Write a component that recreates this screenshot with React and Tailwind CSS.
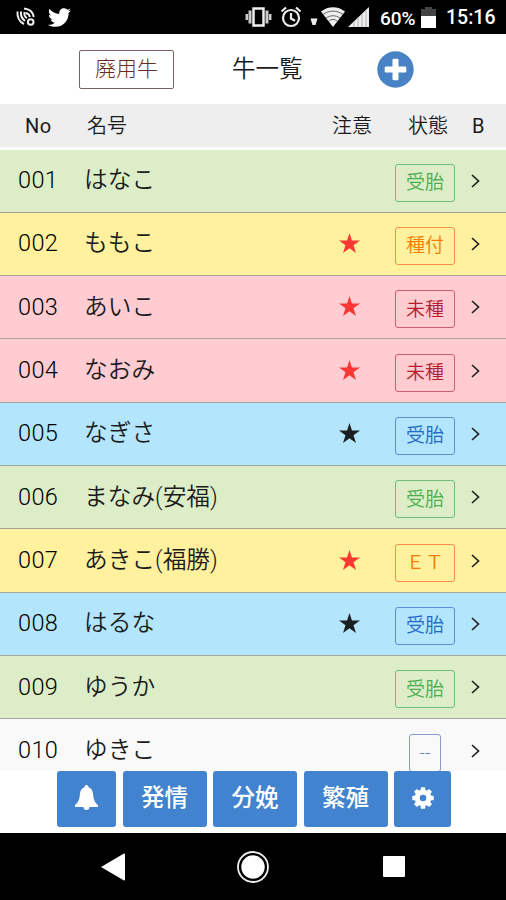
import { FaTwitter } from "react-icons/fa6";

const themes = {
  green: "bg-[#dcedc8]",
  yellow: "bg-[#fff19d]",
  pink: "bg-[#ffccd2]",
  blue: "bg-[#b3e5fc]",
  plain: "bg-[#f9f9f9]",
};

const tags = {
  green: "w-[60px] border-[#6fbe78] text-[#4cae50]",
  orange: "w-[60px] border-[#ff8c4a] text-[#f57c00]",
  red: "w-[60px] border-[#c9606f] text-[#b71c2c]",
  blue: "w-[60px] border-[#5b8fd6] text-[#1f68c4]",
  none: "w-[32px] mr-[14px] border-[#8799cf] text-[#6d82c0]",
};

const cows = [
  { no: "001", name: "はなこ", theme: "green", tag: "green", label: "受胎" },
  { no: "002", name: "ももこ", theme: "yellow", tag: "orange", label: "種付", star: "red" },
  { no: "003", name: "あいこ", theme: "pink", tag: "red", label: "未種", star: "red" },
  { no: "004", name: "なおみ", theme: "pink", tag: "red", label: "未種", star: "red" },
  { no: "005", name: "なぎさ", theme: "blue", tag: "blue", label: "受胎", star: "black" },
  { no: "006", name: "まなみ(安福)", theme: "green", tag: "green", label: "受胎" },
  { no: "007", name: "あきこ(福勝)", theme: "yellow", tag: "orange", label: "ＥＴ", star: "red" },
  { no: "008", name: "はるな", theme: "blue", tag: "blue", label: "受胎", star: "black" },
  { no: "009", name: "ゆうか", theme: "green", tag: "green", label: "受胎" },
  { no: "010", name: "ゆきこ", theme: "plain", tag: "none", label: "--" },
];

const gearTeeth = [0, 45, 90, 135, 180, 225, 270, 315];

function StatusBar() {
  return (
    <div className="flex h-[34px] shrink-0 items-center bg-black text-white">
      <svg className="ml-[16px] h-[20px] w-[20px]" viewBox="0 0 20 20" fill="none" stroke="#eee" strokeWidth="2">
        <path d="M1.500 4.500C1 10 3.500 15 8 17" />
        <path d="M5 4.500C4.500 9 6 12 9 13.800" />
        <path d="M8.500 5C8 8 9 10 11 11" />
        <path d="M8 1.500C13 2 17 5 17.800 10" />
        <path d="M9.500 6C12 6.500 13.500 8 14 10" />
        <circle cx="14.700" cy="15" r="2.800" />
      </svg>
      <FaTwitter className="ml-[12px] h-[23px] w-[23px]" />
      <svg className="ml-[174px] h-[20px] w-[27px]" viewBox="0 0 27 20" fill="none" stroke="#eee" strokeWidth="2.500">
        <rect x="8.500" y="1.500" width="10" height="17" />
        <path d="M5 3.500v13M22 3.500v13" stroke="#ccc" strokeWidth="3" />
        <path d="M1.800 7v6M25.200 7v6" stroke="#ccc" />
      </svg>
      <svg className="ml-[8px] h-[22px] w-[22px]" viewBox="0 0 22 22" fill="none" stroke="#eee" strokeWidth="2.200">
        <circle cx="11" cy="12" r="8" />
        <path d="M1.500 5.500l4.500-4M20.500 5.500l-4.500-4M11 7v5.500l4 2.300" />
      </svg>
      <svg className="ml-[8px] h-[22px] w-[8px]" viewBox="0 0 8 22" fill="#eee">
        <path d="M.5 12.500h7l-2 6.500h-3z" />
      </svg>
      <svg className="ml-[3px] h-[20px] w-[24px]" viewBox="0 0 24 20" fill="#eee">
        <path d="M0 4.500C7-1.200 17-1.200 24 4.500L12 20z" />
        <path d="M2 7.500c6-4.500 14-4.500 20 0M5 11c4-3 10-3 14 0M8 14c2-2 6-2 8 0" fill="none" stroke="#666" strokeWidth="1" />
      </svg>
      <svg className="ml-[3px] h-[20px] w-[21px]" viewBox="0 0 21 20" fill="#eee">
        <path d="M0 20L21 0v20z" />
        <path d="M6 14v6M10 10v10M14 7v13M18 4v16" stroke="#999" strokeWidth=".7" />
      </svg>
      <span className="ml-[11px] mt-[2px] w-[37px] text-[19px] font-medium leading-none tracking-[-0.1px]">60%</span>
      <svg className="ml-[4px] h-[21px] w-[15px]" viewBox="0 0 15 21">
        <path d="M0 2h4V0h7v2h4v7H0z" fill="#444" />
        <path d="M0 9h15v12H0z" fill="#fff" />
      </svg>
      <span className="ml-[10px] mt-[2px] text-[19.500px] font-medium leading-none">15:16</span>
    </div>
  );
}

function CowRow({ no, name, theme, tag, label, star }) {
  return (
    <div className={`flex h-[63.33px] shrink-0 items-center border-b border-[#a5a49a] ${themes[theme]}`}>
      <span className="ml-[18px] w-[66px] text-[23.500px] font-light tracking-[0.4px] text-black">{no}</span>
      <span className="w-[255px] whitespace-nowrap text-[23.700px] font-[350]">{name}</span>
      <span className="w-[21px]">
        {star && (
          <svg className={`mb-[2px] h-[20px] w-[21px] ${star === "red" ? "text-[#f93832]" : "text-[#1c1f22]"}`} viewBox="0 0 21 20" fill="currentColor">
            <path d="M10.500 0l2.450 7.600H21l-6.500 4.700L17 20l-6.500-4.700L4 20l2.500-7.700L0 7.600h8.050z" />
          </svg>
        )}
      </span>
      <span className="flex flex-1 justify-end">
        <span className={`mt-[4px] flex h-[38px] items-center justify-center whitespace-nowrap rounded-[3px] border text-[19px] font-[350] leading-none ${tags[tag]}`}>
          {label}
        </span>
      </span>
      <svg className="ml-[16px] mr-[26px] h-[14px] w-[9px] shrink-0" viewBox="0 0 9 14" fill="none" stroke="#222" strokeWidth="1.700">
        <path d="M1 1l6.500 6L1 13" />
      </svg>
    </div>
  );
}

function Action({ children, size }) {
  return (
    <button className={`flex h-[56px] items-center justify-center rounded-[3px] bg-[#4183ce] text-[23.500px] font-medium text-white ${size}`}>
      {children}
    </button>
  );
}

export default function App() {
  return (
    <div className="flex h-[900px] w-[506px] flex-col overflow-hidden bg-white font-[Roboto,'Noto_Sans_CJK_JP',sans-serif] text-[#1b1b1b]">
      <StatusBar />
      <header className="flex h-[70px] shrink-0 items-center">
        <button className="ml-[79px] flex h-[39px] w-[95px] items-center justify-center rounded-[2px] border border-[#7d6060] pt-[2px] text-[21px] font-light text-[#6b2a22]">
          廃用牛
        </button>
        <h1 className="ml-[58px] mt-px w-[145px] text-[23.500px] font-[350]">牛一覧</h1>
        <svg className="mt-px h-[37px] w-[37px]" viewBox="0 0 37 37" fill="none">
          <circle cx="18.500" cy="18.500" r="18.200" fill="#4682c4" />
          <rect x="15.500" y="7.700" width="6" height="21.600" rx="1.200" fill="#fff" />
          <rect x="7.700" y="15.500" width="21.600" height="6" rx="1.200" fill="#fff" />
        </svg>
      </header>
      <div className="flex h-[43px] shrink-0 items-center bg-[#eee] text-[20px] font-[350]">
        <span className="ml-[25px] w-[62px] font-normal tracking-[0.5px]">No</span>
        <span className="w-[245px]">名号</span>
        <span className="w-[76px]">注意</span>
        <span className="w-[64px]">状態</span>
        <span className="font-normal">B</span>
      </div>
      <main className="flex h-[624px] shrink-0 flex-col overflow-hidden pt-[2.500px]">
        {cows.map((cow) => (
          <CowRow key={cow.no} {...cow} />
        ))}
      </main>
      <footer className="flex h-[62px] shrink-0 items-start gap-[6.500px] pl-[57px]">
        <Action size="w-[59px]">
          <svg className="mb-[3px] h-[25px] w-[23px]" viewBox="0 0 23 25" fill="currentColor">
            <path d="M11.500 0c1.200 0 2 .9 2 2.200 3 1 4.200 3.500 4.600 7 .5 5 1.400 8 4.900 10.800v2h-8.500c0 1.800-1.300 3-3 3s-3-1.200-3-3H0v-2c3.500-2.800 4.400-5.800 4.900-10.800.4-3.500 1.600-6 4.600-7C9.500.9 10.300 0 11.500 0z" />
          </svg>
        </Action>
        <Action size="w-[84px]">発情</Action>
        <Action size="w-[84px]">分娩</Action>
        <Action size="w-[84px]">繁殖</Action>
        <Action size="w-[57px]">
          <svg className="mb-[2px] h-[22px] w-[22px]" viewBox="-11 -11 22 22">
            {gearTeeth.map((angle) => (
              <path key={angle} d="M-2.700-6.500L-2-10.700H2L2.700-6.500z" fill="#fff" transform={`rotate(${angle})`} />
            ))}
            <circle r="5.800" fill="none" stroke="#fff" strokeWidth="5" />
          </svg>
        </Action>
      </footer>
      <nav className="flex flex-1 items-center bg-black">
        <svg className="ml-[101px] h-[28px] w-[24px]" viewBox="0 0 24 28" fill="#fff">
          <path d="M0 14L23 0.500q1 0 1 1v25q0 1-1 1z" />
        </svg>
        <svg className="ml-[112px] h-[32px] w-[32px]" viewBox="0 0 32 32" fill="none">
          <circle cx="16" cy="16" r="15" stroke="#eee" strokeWidth="1.800" />
          <circle cx="16" cy="16" r="11.700" fill="#fff" />
        </svg>
        <span className="ml-[114px] h-[21px] w-[22px] rounded-[1px] bg-white" />
      </nav>
    </div>
  );
}
